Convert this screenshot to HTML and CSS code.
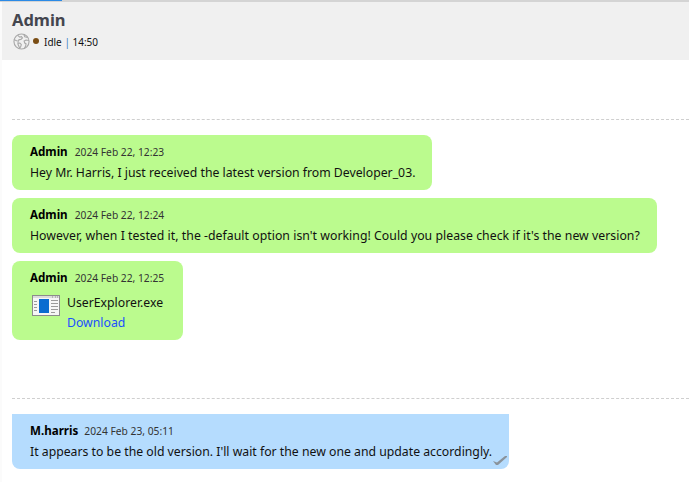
FILE: index.html
```html
<!DOCTYPE html>
<html lang="en">
<head>
<meta charset="utf-8">
<title>Admin</title>
<link rel="stylesheet" href="styles.css">
</head>
<body>
<div class="tabline"><div class="tabline-active"></div></div>
<div class="pane">
  <header class="head">
    <h1 class="title">Admin</h1>
    <div class="status">
      <svg class="globe" width="17" height="17" viewBox="0 0 18 18" fill="none" stroke="#a8a8a8" stroke-width="1.2">
        <circle cx="9" cy="9" r="8"/>
        <path d="M5 2.500l2.200 1.900 1.800-.6 1 1.400-1.600 1.600-2 .2-.6 1.600-2-.4-3-1.400M11.500 1.500l1 2.500 3 .6M17 8l-3.200-.6-2 1.200.6 2 1.400.8-.4 2.400-1.400 2.600M5.200 10.400l2.300.4 1.300 1.600-.6 2-1 1.600-1-2-.9-2z"/>
      </svg>
      <span class="dot"></span>
      <span class="status-text">Idle <span class="sep">|</span> 14:50</span>
    </div>
  </header>
  <main class="log">
    <hr class="rule rule-first">
    <div class="bubble me">
      <div class="meta"><span class="who">Admin</span><span class="when">2024 Feb 22, 12:23</span></div>
      <div class="text">Hey Mr. Harris, I just received the latest version from Developer_03.</div>
    </div>
    <div class="bubble me">
      <div class="meta"><span class="who">Admin</span><span class="when">2024 Feb 22, 12:24</span></div>
      <div class="text text-wide">However, when I tested it, the -default option isn't working! Could you please check if it's the new version?</div>
    </div>
    <div class="bubble me file-bubble">
      <div class="meta"><span class="who">Admin</span><span class="when">2024 Feb 22, 12:25</span></div>
      <div class="file">
        <svg class="exe" width="28" height="21" viewBox="0 0 28 21">
          <rect x=".5" y=".5" width="27" height="20" fill="#f6f6f6" stroke="#8c8c8c"/>
          <rect x="1" y="1" width="26" height="2" fill="#dcdcdc"/>
          <path d="M20 2h1M23 2h1M25 2h1" stroke="#8c8c8c"/>
          <rect x="7" y="4" width="10" height="14" fill="#0a6cd0"/>
          <path d="M2 6.500h3M2 9.500h3M2 12.500h3M2 15.500h3M19 5.500h7M19 8.500h7M19 11.500h7M19 14.500h7M19 17.500h4" stroke="#9a9a9a"/>
        </svg>
        <div class="file-info">
          <div class="file-name">UserExplorer.exe</div>
          <a class="download" href="#">Download</a>
        </div>
      </div>
    </div>
    <hr class="rule rule-second">
    <div class="bubble them">
      <div class="meta"><span class="who">M.harris</span><span class="when">2024 Feb 23, 05:11</span></div>
      <div class="text">It appears to be the old version. I'll wait for the new one and update accordingly.</div>
      <svg class="tick" width="14" height="10" viewBox="0 0 14 10"><polygon points="0,5 4,6.500 12,0 14,0 14,1 5,9 3,9" fill="#8a939b"/></svg>
    </div>
  </main>
</div>
</body>
</html>
```
FILE: styles.css
```css
* { box-sizing: border-box; }
html, body { margin: 0; padding: 0; }
body {
  height: 482px;
  overflow: hidden;
  background: #fbfbfb;
  font-family: "Noto Sans", "Open Sans", sans-serif;
  color: #111;
}
.tabline { height: 2px; background: #d4d4d4; }
.tabline-active { width: 62px; height: 1px; background: #2b8ae6; }
.pane { margin-left: 2px; background: #fff; height: 480px; }
.head { height: 58px; background: #f0f0f0; padding: 6px 10px 0; }
.title { margin: 0; font-size: 16.500px; line-height: 23px; font-weight: 700; color: #44464f; }
.status { display: flex; align-items: center; height: 20px; }
.globe { flex: none; margin-left: 1px; }
.dot { width: 6px; height: 6px; border-radius: 50%; background: #7a4d14; margin-left: 3px; }
.status-text { font-size: 10px; margin-left: 5px; margin-top: 2px; color: #111; }
.sep { color: #3b7fc4; }
.log { padding: 0 0 0 10px; }
.rule { border: 0; border-top: 1px dashed #cfcfcf; margin: 0; }
.rule-first { margin-top: 59px; margin-bottom: 15px; }
.rule-second { margin-top: 58px; margin-bottom: 15px; }
.bubble {
  position: relative;
  width: fit-content;
  padding: 7px 17px 7px 18px;
  border-radius: 8px;
  margin-bottom: 8px;
  height: 55px;
}
.me { background: #bbfb8e; }
.them { background: #b5dcfe; border-radius: 0 0 8px 8px; }
.them .when { margin-left: 6px; }
.file-bubble { height: 79px; margin-bottom: 0; padding-right: 19px; }
.meta { display: flex; align-items: baseline; height: 20px; line-height: 20px; }
.who { font-size: 11.600px; font-weight: 700; color: #000; }
.when { font-size: 10.250px; margin-left: 7px; color: #333; }
.text { font-size: 12.250px; line-height: 20px; margin-top: 1px; white-space: nowrap; color: #111; }
.text-wide { letter-spacing: 0.04px; }
.file { display: flex; align-items: flex-start; margin-top: 5px; }
.exe { flex: none; margin-top: 2px; margin-left: 2px; }
.file-info { margin-left: 7px; font-size: 12.250px; line-height: 20px; }
.file-name { color: #111; }
.download { color: #1a4fff; text-decoration: none; display: block; }
.tick { position: absolute; right: 2px; bottom: 3px; }
```
